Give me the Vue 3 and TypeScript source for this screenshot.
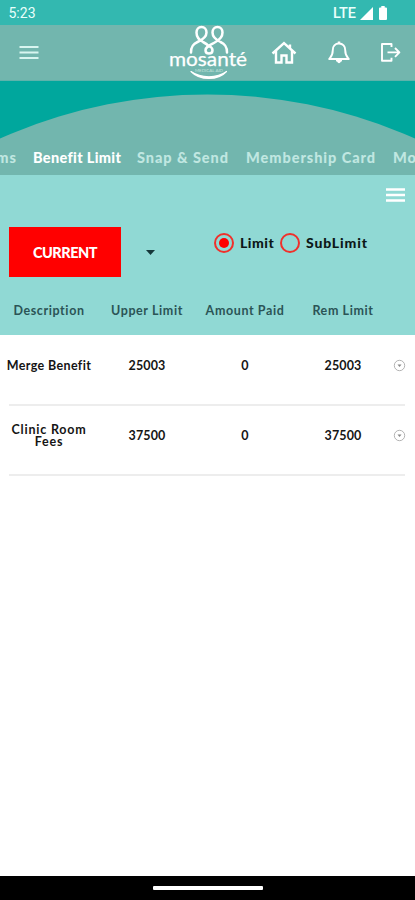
<script setup lang="ts">
import { ref } from 'vue'

interface Tab { label: string; cls: string }
interface Benefit { description: string; cls: string; upper: string; paid: string; rem: string }

const activeTab = ref('Benefit Limit')
const limitType = ref('Limit')
const tabs: Tab[] = [
  { label: 'Claims', cls: 'claims' },
  { label: 'Benefit Limit', cls: 'benefit' },
  { label: 'Snap & Send', cls: 'snap' },
  { label: 'Membership Card', cls: 'member' },
  { label: 'More', cls: 'more' },
]
const columns: string[] = ['Description', 'Upper Limit', 'Amount Paid', 'Rem Limit']
const rows: Benefit[] = [
  { description: 'Merge Benefit', cls: 'merge', upper: '25003', paid: '0', rem: '25003' },
  { description: 'Clinic Room Fees', cls: 'clinic', upper: '37500', paid: '0', rem: '37500' },
]
</script>

<template>
  <div class="screen">
    <div class="status">
      <span class="clock">5:23</span>
      <span class="network">LTE</span>
      <svg class="signal" width="13" height="13" viewBox="0 0 13 13"><path d="M13 0V13H0Z" fill="#fff" /></svg>
      <svg class="battery" width="8" height="14" viewBox="0 0 8 14"><path d="M2.300 0h3.400v1.500H7q1 0 1 1V13q0 1-1 1H1q-1 0-1-1V2.500q0-1 1-1h1.300Z" fill="#fff" /></svg>
    </div>

    <header class="header">
      <button class="icon-button menu" aria-label="Menu">
        <svg width="20" height="15" viewBox="0 0 20 15"><path d="M.5 2h19M.5 7.500h19M.5 13h19" stroke="#d8f5f0" stroke-width="2" /></svg>
      </button>
      <svg class="logo" width="82" height="56" viewBox="0 0 82 56" fill="none" stroke="#fff">
        <path d="M23 27.500c0-6 2-8.500 6.500-10.500 6-2.700 9-5.500 9-9.500 0-3.300-2-5.500-5-5.500s-5 2.200-5 5.500c0 4.500 2.500 7.500 6.500 9.500 3 1.400 4.500 2.500 6 4.500" stroke-width="2.500" stroke-linecap="round" />
        <path d="M59 27.500c0-6-2-8.500-6.500-10.500-5.500-2.700-8-5.500-8-9.500 0-3.300 2-5.500 5-5.500s5 2.200 5 5.500c0 4.500-2.500 7-7 9.500-5 2.800-10 4.500-10 8.200 0 2 1.400 3.300 3.500 3.300s3.500-1.300 3.500-3.300c0-1.700-1-3-3-4.200" stroke-width="2.500" stroke-linecap="round" />
        <text x="1" y="40.500" textLength="78" lengthAdjust="spacingAndGlyphs" font-family="Lato, sans-serif" font-size="20" font-weight="400" fill="#fff" stroke="#fff" stroke-width=".25">mosanté</text>
        <text x="27" y="47" textLength="28" lengthAdjust="spacingAndGlyphs" font-family="Lato, sans-serif" font-size="4" fill="#c4e3dd" stroke="none">MEDICAL AID</text>
        <path d="M23 46.500C33 53.500 49 53.500 58.500 46.500C50 55.800 32 55.800 23 46.500Z" fill="#fff" stroke-width="1.200" stroke-linejoin="round" />
      </svg>
      <button class="icon-button home" aria-label="Home">
        <svg width="26" height="24" viewBox="0 0 26 24" fill="none" stroke="#fff" stroke-width="2.400" stroke-linejoin="miter"><path d="M1.500 12.500 13 2.200l11.500 10.300M5 10v11.500h5.500v-7h5v7H21V10M19 7V3.500" /></svg>
      </button>
      <button class="icon-button bell" aria-label="Notifications">
        <svg width="22" height="23" viewBox="0 0 22 23" fill="none" stroke="#fff" stroke-width="1.900" stroke-linejoin="round"><path d="M11 2.500c-4 0-6.200 3-6.200 6.500 0 5.500-1.500 6.500-3.600 9h19.600c-2.100-2.500-3.600-3.500-3.600-9 0-3.500-2.200-6.500-6.200-6.500Z" /><path d="M11 .5v2" stroke-width="2.500" /><path d="M8 19.500h6L11 22Z" fill="#fff" stroke-width="1" /></svg>
      </button>
      <button class="icon-button logout" aria-label="Log out">
        <svg width="20" height="19" viewBox="0 0 20 19" fill="none" stroke="#fff" stroke-width="1.900" stroke-linejoin="round"><path d="M10.500 4V1H1v16.800h9.500v-3M6.500 9.400H18M14 5l4.400 4.400L14 13.800" /></svg>
      </button>
    </header>

    <section class="hero">
      <svg class="curve" width="415" height="94" viewBox="0 0 415 94"><circle cx="207.500" cy="525" r="511.500" fill="#72b6ae" /></svg>
      <nav class="tabs">
        <button v-for="tab in tabs" :key="tab.label" class="tab" :class="[tab.cls, { active: tab.label === activeTab }]" @click="activeTab = tab.label">{{ tab.label }}</button>
      </nav>
    </section>

    <section class="panel">
      <div class="panel-menu">
        <svg width="19" height="14" viewBox="0 0 19 14"><path d="M0 1.500h19M0 7h19M0 12.500h19" stroke="#fff" stroke-width="2.500" /></svg>
      </div>
      <div class="filters">
        <button class="period">CURRENT</button>
        <svg class="caret" width="9" height="5" viewBox="0 0 9 5"><path d="M0 0h9L4.500 5Z" fill="#15383a" /></svg>
        <div class="options">
          <label v-for="option in ['Limit', 'SubLimit']" :key="option" class="option" @click="limitType = option">
            <span class="radio"><i v-if="limitType === option" /></span>
            <span class="option-text" :class="option.toLowerCase()">{{ option }}</span>
          </label>
        </div>
      </div>
      <div class="grid head">
        <span v-for="column in columns" :key="column">{{ column }}</span>
      </div>
    </section>

    <main class="list">
      <div v-for="row in rows" :key="row.description" class="row">
        <div class="grid values">
          <span class="description" :class="row.cls">{{ row.description }}</span>
          <span>{{ row.upper }}</span>
          <span>{{ row.paid }}</span>
          <span>{{ row.rem }}</span>
          <svg width="13" height="13" viewBox="0 0 13 13"><circle cx="6.500" cy="6.500" r="5.200" fill="none" stroke="#aaa" stroke-width=".9" /><path d="M4.500 5.500h4l-2 2.500Z" fill="#888" /></svg>
        </div>
      </div>
    </main>

    <footer class="navigation"><span class="handle" /></footer>
  </div>
</template>

<style>
body { margin: 0; }
</style>

<style scoped>
.screen { width: 415px; height: 900px; display: flex; flex-direction: column; overflow: hidden; background: #fff; font-family: Lato, "Open Sans", sans-serif; color: #151515; }
button { border: 0; padding: 0; margin: 0; background: none; font: inherit; color: inherit; }
svg { display: block; flex: none; }
.status { height: 25px; flex: none; display: flex; align-items: center; background: #33b8b0; color: #e9fffb; padding: 1px 28px 0 8.500px; box-sizing: border-box; font: 14px Roboto, sans-serif; }
.network { margin-left: auto; margin-right: 4px; font-size: 14.500px; font-weight: 500; }
.signal { margin-right: 6px; }
.header { height: 56px; flex: none; display: flex; align-items: center; background: #72b6ae; padding-left: 18.500px; border-bottom: 1px solid #5db3ab; box-sizing: border-box; }
.logo { margin-left: 129px; }
.home { margin-left: 21.500px; }
.bell { margin-left: 31px; }
.logout { margin-left: 30.500px; }
.hero { height: 94px; flex: none; display: grid; background: #00a79d; }
.curve, .tabs { grid-area: 1 / 1; }
.tabs { align-self: end; justify-self: start; display: flex; width: 415px; height: 34px; overflow: hidden; align-items: center; }
.tab { flex: none; color: #c0e7e1; font-size: 14.500px; line-height: 18px; font-weight: 900; letter-spacing: .95px; white-space: nowrap; text-align: left; }
.tab.active { color: #fff; letter-spacing: .33px; }
.claims { width: 48px; margin-left: -32px; }
.benefit { margin-left: 17px; width: 88px; }
.snap { margin-left: 16px; width: 93px; }
.member { margin-left: 16px; width: 131px; }
.more { margin-left: 16px; }
.panel { height: 160px; flex: none; background: #90d9d4; display: flex; flex-direction: column; }
.panel-menu { height: 52px; padding: 13px 10px 0 0; display: flex; justify-content: flex-end; box-sizing: border-box; }
.filters { height: 50px; display: flex; align-items: center; padding-left: 9px; }
.period { width: 112px; height: 50px; background: #f00; color: #fff; font-size: 14.500px; font-weight: 900; letter-spacing: -.5px; }
.caret { margin-left: 25px; }
.options { display: flex; align-self: flex-start; gap: 6px; margin: 5px 0 0 59px; }
.option { display: flex; align-items: center; gap: 6px; font-size: 14px; line-height: 18px; font-weight: 900; height: 22px; }
.radio { width: 20px; height: 20px; border: 2px solid #f0302b; border-radius: 50%; box-sizing: border-box; display: flex; align-items: center; justify-content: center; }
.radio i { width: 10px; height: 10px; border-radius: 50%; background: #f00; }
.option-text { color: #0c1717; white-space: nowrap; letter-spacing: .85px; }
.option-text.limit { width: 34px; letter-spacing: .5px; }
.grid { display: grid; grid-template-columns: repeat(4, 98px) 15px; align-items: center; justify-items: center; }
.head { height: 17px; margin-top: 25px; font-size: 12.500px; font-weight: 700; letter-spacing: .6px; color: #2b5456; }
.list { flex: 1; }
.values { height: 70px; padding-bottom: 9px; box-sizing: border-box; font-size: 12.500px; font-weight: 700; line-height: 12px; text-align: center; letter-spacing: .15px; }
.row::after { content: ""; display: block; height: 2px; margin: -1px 10px -1px 9px; background: #ededed; }
.description { width: 92px; letter-spacing: .35px; }
.clinic { width: 80px; letter-spacing: .8px; }
.navigation { height: 24px; background: #000; display: flex; align-items: center; justify-content: center; flex: none; }
.handle { width: 110px; height: 4px; border-radius: 1px; background: #fff; }
</style>
